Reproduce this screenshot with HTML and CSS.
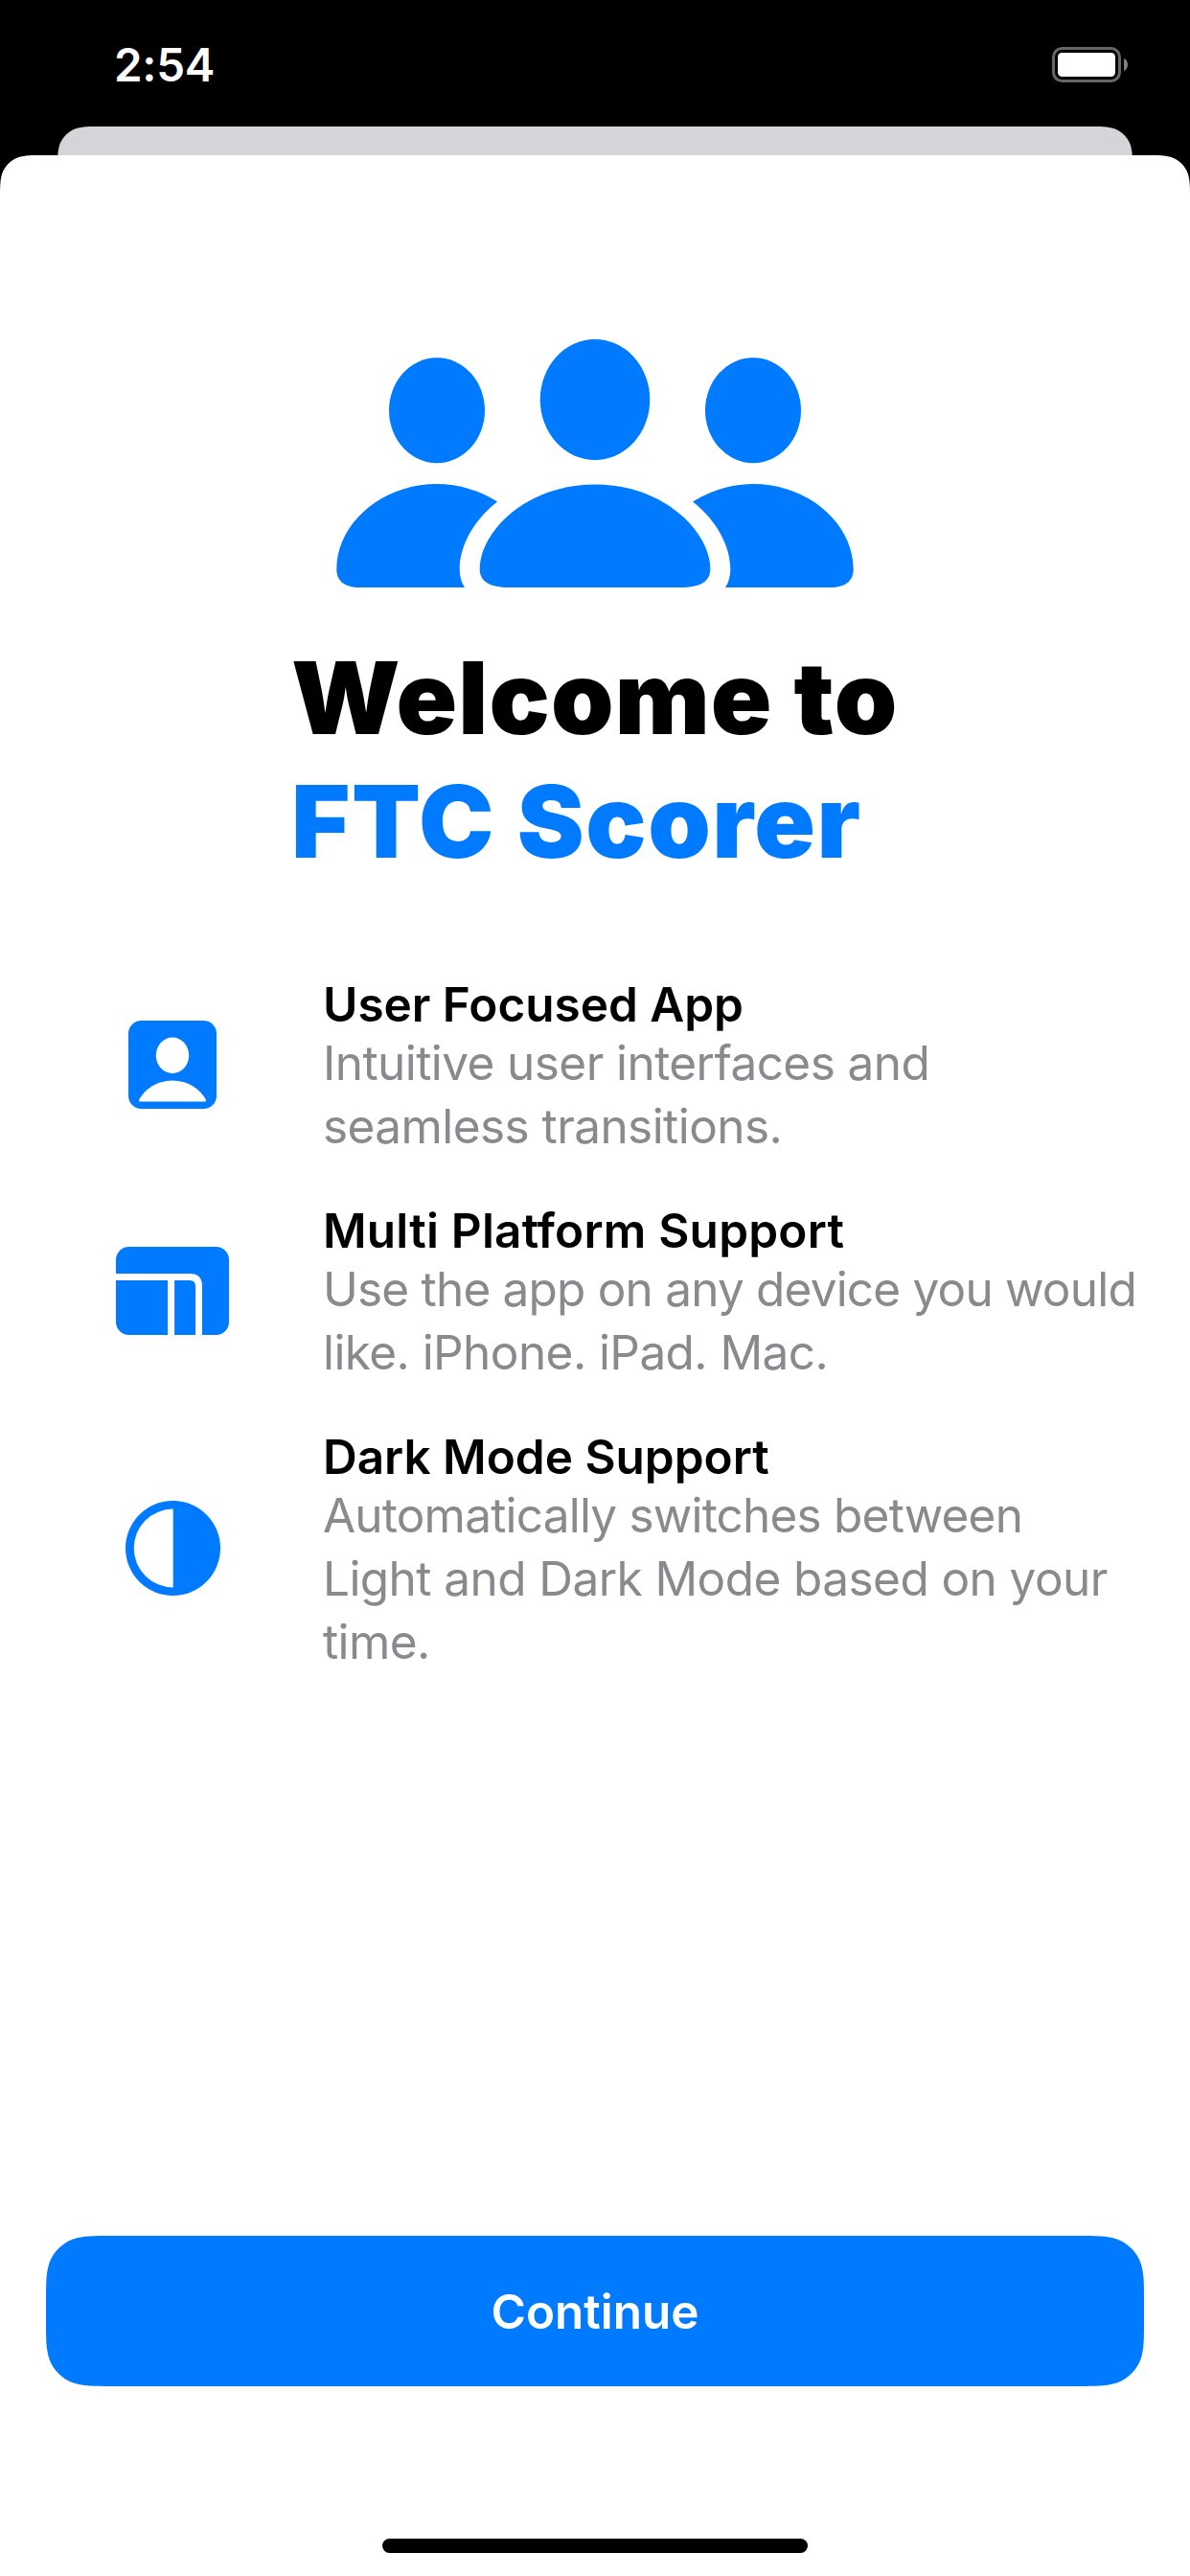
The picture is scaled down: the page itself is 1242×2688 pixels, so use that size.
FILE: index.html
```html
<!DOCTYPE html>
<html lang="en">
<head>
<meta charset="utf-8">
<title>FTC Scorer</title>
<link rel="stylesheet" href="styles.css">
</head>
<body>
<div class="screen">
  <header class="status">
    <span class="time">2:54</span>
    <svg class="battery" viewBox="0 0 80 38" width="80" height="38">
      <rect x="1.5" y="1.5" width="69" height="34" rx="9" fill="none" stroke="#666" stroke-width="3"/>
      <rect x="6" y="6" width="60" height="25" rx="4.5" fill="#fff"/>
      <path d="M75 12C80.300 14 80.300 23 75 25Z" fill="#808080"/>
    </svg>
  </header>
  <div class="backsheet"></div>
  <main class="sheet">
    <svg class="hero" viewBox="351 354 540 260" width="540" height="260">
      <ellipse cx="621" cy="417" rx="57.300" ry="63"/>
      <ellipse cx="456" cy="428.200" rx="50" ry="55"/>
      <ellipse cx="786" cy="428.200" rx="50" ry="55"/>
      <path d="M351.300 594C351.300 546 399 505 456 505C478 505 500 511.500 519 523.500C494 543 479.700 570 479.700 594C479.700 601 481.500 608 485 613H376C358 613 351.300 605 351.300 594Z"/>
      <path d="M890.700 594C890.700 546 843 505 786 505C764 505 742 511.500 723 523.500C748 543 762.300 570 762.300 594C762.300 601 760.500 608 757 613H866C884 613 890.700 605 890.700 594Z"/>
      <path d="M500.700 594C500.700 555 549 505.500 621 505.500S741.300 555 741.300 594C741.300 606 732 613 710 613H532C510 613 500.700 606 500.700 594Z"/>
    </svg>
    <h1 class="title"><span class="welcome">Welcome to</span><span class="app">FTC Scorer</span></h1>
    <section class="features">
      <article class="feature">
        <div class="icon">
          <svg viewBox="0 0 92 92" width="92" height="92">
            <rect width="92" height="92" rx="13.500"/>
            <ellipse class="cut" cx="46" cy="36.300" rx="17.200" ry="18.700"/>
            <path class="cut" d="M11.300 82C17 72 29 62.400 46 62.400S75 72 80.700 82Q81.500 84.600 79.500 84.600H12.500Q10.500 84.600 11.300 82Z"/>
          </svg>
        </div>
        <div class="copy">
          <h2>User Focused App</h2>
          <p>Intuitive user interfaces and<br>seamless transitions.</p>
        </div>
      </article>
      <article class="feature">
        <div class="icon">
          <svg viewBox="0 0 118 92" width="118" height="92">
            <rect width="118" height="92" rx="13.500"/>
            <path class="line" d="M0 31.500H77Q86.500 31.500 86.500 41V92M57.600 31.500V92"/>
          </svg>
        </div>
        <div class="copy">
          <h2 class="loose">Multi Platform Support</h2>
          <p><span class="tight">Use the app on any device you would</span><br>like. iPhone. iPad. Mac.</p>
        </div>
      </article>
      <article class="feature">
        <div class="icon icon-mode">
          <svg viewBox="0 0 99 99" width="99" height="99">
            <circle cx="49.500" cy="49.500" r="49.500"/>
            <path class="cut" d="M49.700 8.500A41 41 0 0 0 49.700 90.500Z"/>
          </svg>
        </div>
        <div class="copy">
          <h2>Dark Mode Support</h2>
          <p><span class="tight">Automatically switches between</span><br>Light and Dark Mode based on your<br>time.</p>
        </div>
      </article>
    </section>
    <button class="continue" type="button">Continue</button>
    <div class="home"></div>
  </main>
</div>
</body>
</html>
```
FILE: styles.css
```css
* { box-sizing: border-box; margin: 0; padding: 0; }
body { background: #000; font-family: Inter, "Liberation Sans", sans-serif; }
svg { display: block; }

.screen { width: 1242px; height: 2688px; display: flex; flex-direction: column; overflow: hidden; }

.status {
  height: 132px;
  padding: 0 64px 0 119px;
  display: flex;
  justify-content: space-between;
  align-items: flex-start;
  color: #fff;
}
.time { font-size: 47.5px; font-weight: 600; line-height: 58px; margin-top: 39px; letter-spacing: -0.3px; }
.battery { margin-top: 49px; }

.backsheet {
  height: 30px;
  margin: 0 60px;
  background: #d5d4d9;
  clip-path: path("M0 45.900C0 32.700 0 26.100 2.200 18.900C5.100 11.200 11.200 5.100 18.900 2.200C26.100 0 32.700 0 45.900 0H1076.100C1089.300 0 1095.900 0 1103.100 2.200C1110.800 5.100 1116.900 11.200 1119.800 18.900C1122 26.100 1122 32.700 1122 45.900Z");
}

.sheet {
  flex: 1;
  padding-top: 192px;
  background: #fff;
  display: flex;
  flex-direction: column;
  align-items: center;
  clip-path: path("M0 2526V45.900C0 32.700 0 26.100 2.200 18.900C5.100 11.200 11.200 5.100 18.900 2.200C26.100 0 32.700 0 45.900 0H1196.100C1209.300 0 1215.900 0 1223.100 2.200C1230.800 5.100 1236.900 11.200 1239.800 18.900C1242 26.100 1242 32.700 1242 45.900V2526Z");
}
.hero { fill: #007aff; }

.title {
  width: 634px;
  margin-top: 49px;
  display: flex;
  flex-direction: column;
  font-size: 105px;
  font-weight: 900;
  line-height: 129px;
  white-space: nowrap;
}
.welcome { letter-spacing: 1.1px; }
.app { color: #007aff; letter-spacing: 1.6px; }

.features { width: 1242px; height: 726px; margin-top: 99px; display: flex; flex-direction: column; gap: 48px; }
.feature { display: flex; align-items: center; padding-left: 120px; gap: 97px; }
.icon { width: 120px; margin-bottom: 6px; display: flex; justify-content: center; fill: #007aff; }
.icon-mode { margin-bottom: 8px; }
.cut { fill: #fff; }
.line { fill: none; stroke: #fff; stroke-width: 7; }
.copy { font-size: 49.5px; white-space: nowrap; }
.copy h2 { font-size: 49.5px; line-height: 56px; font-weight: 600; letter-spacing: -0.03px; }
.copy .loose { letter-spacing: 0.2px; }
.copy p { line-height: 66px; color: #8a8a8e; letter-spacing: -0.57px; }
.tight { letter-spacing: -0.8px; }

.continue {
  width: 1146px;
  height: 157px;
  margin-top: 587px;
  border: 0;
  background: #007aff;
  color: #fff;
  font: 600 49.5px/60px Inter, "Liberation Sans", sans-serif;
  letter-spacing: -0.05px;
  clip-path: path("M68.800 0H1077.200C1097 0 1106.900 0 1117.600 3.400C1129.200 7.600 1138.400 16.800 1142.600 28.400C1146 39.100 1146 49 1146 68.800V88.200C1146 108 1146 117.900 1142.600 128.600C1138.400 140.200 1129.200 149.400 1117.600 153.600C1106.900 157 1097 157 1077.200 157H68.800C49 157 39.100 157 28.400 153.600C16.800 149.400 7.600 140.200 3.400 128.600C0 117.900 0 108 0 88.200V68.800C0 49 0 39.100 3.400 28.400C7.600 16.800 16.800 7.600 28.400 3.400C39.100 0 49 0 68.800 0Z");
}
.home { width: 444px; height: 15px; margin-top: 159px; border-radius: 7.5px; background: #000; }
```
